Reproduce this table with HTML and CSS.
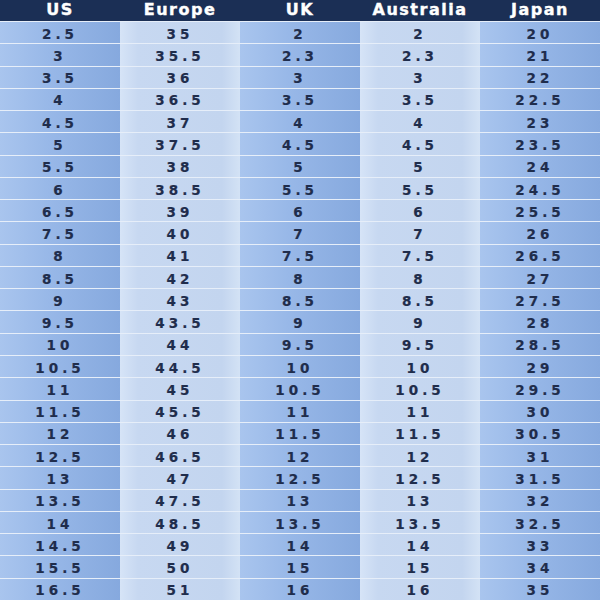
FILE: index.html
```html
<!DOCTYPE html>
<html>
<head>
<meta charset="utf-8">
<link rel="stylesheet" href="styles.css">
</head>
<body>
<div class="chart">
  <div class="hd">US</div><div class="hd">Europe</div><div class="hd">UK</div><div class="hd">Australia</div><div class="hd">Japan</div>
  <div class="c dk">2.5</div><div class="c lt">35</div><div class="c dk">2</div><div class="c lt">2</div><div class="c dk">20</div>
  <div class="c dk">3</div><div class="c lt">35.5</div><div class="c dk">2.3</div><div class="c lt">2.3</div><div class="c dk">21</div>
  <div class="c dk">3.5</div><div class="c lt">36</div><div class="c dk">3</div><div class="c lt">3</div><div class="c dk">22</div>
  <div class="c dk">4</div><div class="c lt">36.5</div><div class="c dk">3.5</div><div class="c lt">3.5</div><div class="c dk">22.5</div>
  <div class="c dk">4.5</div><div class="c lt">37</div><div class="c dk">4</div><div class="c lt">4</div><div class="c dk">23</div>
  <div class="c dk">5</div><div class="c lt">37.5</div><div class="c dk">4.5</div><div class="c lt">4.5</div><div class="c dk">23.5</div>
  <div class="c dk">5.5</div><div class="c lt">38</div><div class="c dk">5</div><div class="c lt">5</div><div class="c dk">24</div>
  <div class="c dk">6</div><div class="c lt">38.5</div><div class="c dk">5.5</div><div class="c lt">5.5</div><div class="c dk">24.5</div>
  <div class="c dk">6.5</div><div class="c lt">39</div><div class="c dk">6</div><div class="c lt">6</div><div class="c dk">25.5</div>
  <div class="c dk">7.5</div><div class="c lt">40</div><div class="c dk">7</div><div class="c lt">7</div><div class="c dk">26</div>
  <div class="c dk">8</div><div class="c lt">41</div><div class="c dk">7.5</div><div class="c lt">7.5</div><div class="c dk">26.5</div>
  <div class="c dk">8.5</div><div class="c lt">42</div><div class="c dk">8</div><div class="c lt">8</div><div class="c dk">27</div>
  <div class="c dk">9</div><div class="c lt">43</div><div class="c dk">8.5</div><div class="c lt">8.5</div><div class="c dk">27.5</div>
  <div class="c dk">9.5</div><div class="c lt">43.5</div><div class="c dk">9</div><div class="c lt">9</div><div class="c dk">28</div>
  <div class="c dk">10</div><div class="c lt">44</div><div class="c dk">9.5</div><div class="c lt">9.5</div><div class="c dk">28.5</div>
  <div class="c dk">10.5</div><div class="c lt">44.5</div><div class="c dk">10</div><div class="c lt">10</div><div class="c dk">29</div>
  <div class="c dk">11</div><div class="c lt">45</div><div class="c dk">10.5</div><div class="c lt">10.5</div><div class="c dk">29.5</div>
  <div class="c dk">11.5</div><div class="c lt">45.5</div><div class="c dk">11</div><div class="c lt">11</div><div class="c dk">30</div>
  <div class="c dk">12</div><div class="c lt">46</div><div class="c dk">11.5</div><div class="c lt">11.5</div><div class="c dk">30.5</div>
  <div class="c dk">12.5</div><div class="c lt">46.5</div><div class="c dk">12</div><div class="c lt">12</div><div class="c dk">31</div>
  <div class="c dk">13</div><div class="c lt">47</div><div class="c dk">12.5</div><div class="c lt">12.5</div><div class="c dk">31.5</div>
  <div class="c dk">13.5</div><div class="c lt">47.5</div><div class="c dk">13</div><div class="c lt">13</div><div class="c dk">32</div>
  <div class="c dk">14</div><div class="c lt">48.5</div><div class="c dk">13.5</div><div class="c lt">13.5</div><div class="c dk">32.5</div>
  <div class="c dk">14.5</div><div class="c lt">49</div><div class="c dk">14</div><div class="c lt">14</div><div class="c dk">33</div>
  <div class="c dk">15.5</div><div class="c lt">50</div><div class="c dk">15</div><div class="c lt">15</div><div class="c dk">34</div>
  <div class="c dk">16.5</div><div class="c lt">51</div><div class="c dk">16</div><div class="c lt">16</div><div class="c dk">35</div>
</div>
</body>
</html>
```
FILE: styles.css
```css
html, body {
  margin: 0;
  padding: 0;
  background: #dfe9f6;
}
.chart {
  width: 600px;
  height: 600px;
  display: grid;
  grid-template-columns: repeat(5, 1fr);
  grid-template-rows: 21px repeat(26, 1fr);
  font-family: "DejaVu Sans", Verdana, sans-serif;
  font-weight: bold;
}
.hd {
  background: #1b2f55;
  color: #ffffff;
  font-size: 16px;
  letter-spacing: 1.5px;
  -webkit-text-stroke: 0.4px #ffffff;
  display: flex;
  align-items: center;
  justify-content: center;
  line-height: 1;
  padding-bottom: 1px;
  box-sizing: border-box;
}
.c {
  display: flex;
  align-items: center;
  justify-content: center;
  color: #1f2d4c;
  font-size: 13.5px;
  letter-spacing: 4px;
  -webkit-text-stroke: 0.2px #1f2d4c;
  border-top: 1px solid #e6eef9;
  padding-top: 2px;
  box-sizing: border-box;
}
.dk {
  background: linear-gradient(to right, #a9c5ee 0%, #98b8e8 40%, #86a9de 100%);
}
.lt {
  background: linear-gradient(to right, #d6e4f7 0%, #c7d8f1 15%, #c3d5ef 85%, #d3e2f5 100%);
}
```
